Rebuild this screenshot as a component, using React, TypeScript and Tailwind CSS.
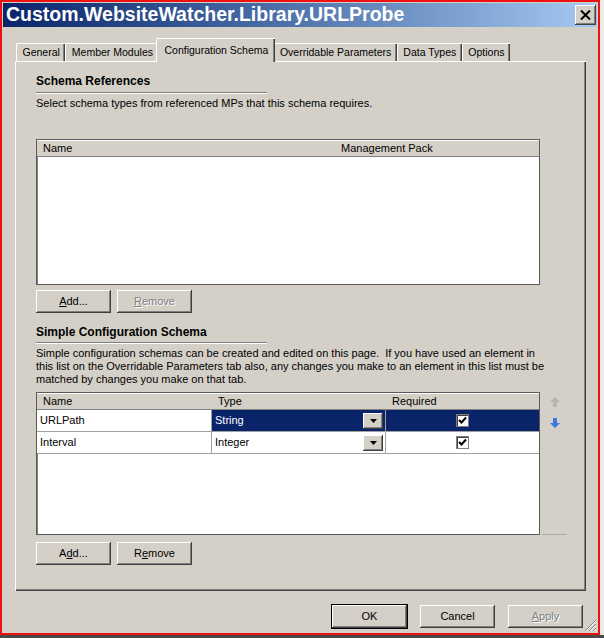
import React from 'react';

const raised =
  'bg-[#d4d0c8] shadow-[inset_-1px_-1px_0_#404040,inset_1px_1px_0_#ffffff,inset_-2px_-2px_0_#808080,inset_2px_2px_0_#d4d0c8]';

function Button({ children, disabled, isDefault }: { children: React.ReactNode; disabled?: boolean; isDefault?: boolean }) {
  return (
    <div
      className={`flex h-[23px] w-[75px] items-center justify-center text-[11px] ${raised} ${
        isDefault ? 'outline outline-1 outline-black' : ''
      } ${disabled ? 'text-[#808080] [text-shadow:1px_1px_0_#ffffff]' : 'text-black'}`}
    >
      {children}
    </div>
  );
}

function Tab({ label, active }: { label: string; active?: boolean }) {
  if (active) {
    return (
      <div className="relative z-10 -mx-[2px] -mb-px flex h-[24px] items-start rounded-tl-[2px] border-l border-t border-white bg-[#d4d0c8] px-[7px] pt-[4px] text-[10.5px] shadow-[inset_-1px_0_0_#404040,inset_-2px_0_0_#808080]">
        {label}
      </div>
    );
  }
  return (
    <div className="flex h-[18px] items-center rounded-tl-[2px] border-l border-t border-white bg-[#d4d0c8] px-[5.5px] text-[10.5px] shadow-[inset_-1px_0_0_#404040,inset_-2px_0_0_#808080]">
      {label}
    </div>
  );
}

function HeaderCell({ label, w, last }: { label: string; w?: string; last?: boolean }) {
  return (
    <div
      className={`flex h-[17px] items-center pl-[6px] text-[11px] ${w ?? 'flex-1'} ${
        last ? '' : 'shadow-[inset_-1px_0_0_#808080,inset_-2px_0_0_#ffffff]'
      } shadow-[inset_0_-1px_0_#808080]`}
    >
      {label}
    </div>
  );
}

function Check() {
  return (
    <div className="flex h-[13px] w-[13px] items-center justify-center border border-[#808080] bg-white shadow-[inset_1px_1px_0_#404040]">
      <svg width="9" height="9" viewBox="0 0 9 9">
        <path d="M1 4 L3.5 6.5 L8 1.5" stroke="#000" strokeWidth="2" fill="none" />
      </svg>
    </div>
  );
}

function DropBtn() {
  return (
    <div className={`flex h-[16px] w-[20px] items-center justify-center ${raised}`}>
      <svg width="7" height="4" viewBox="0 0 7 4">
        <path d="M0 0 H7 L3.5 4 Z" fill="#000" />
      </svg>
    </div>
  );
}

function Row({ name, type, selected }: { name: string; type: string; selected?: boolean }) {
  const sel = selected ? 'bg-[#0a246a] text-white' : 'bg-white text-black';
  return (
    <div className="flex h-[22px] border-b border-[#a0a0a0] text-[11px]">
      <div className="flex w-[175px] items-center border-r border-[#a0a0a0] bg-white pl-[3px]">{name}</div>
      <div className={`flex w-[174px] items-center justify-between border-r border-[#a0a0a0] pl-[3px] pr-[2px] ${sel}`}>
        <span>{type}</span>
        <DropBtn />
      </div>
      <div className={`flex flex-1 items-center justify-center ${sel}`}>
        <Check />
      </div>
    </div>
  );
}

export default function App() {
  return (
    <div className="h-[638px] w-[604px] bg-[#ececec] font-['Liberation_Sans',Arial,sans-serif] text-black">
      <div className="relative flex h-[635px] w-[600px] flex-col border-2 border-[#ee1111] bg-[#d4d0c8]">
        {/* title bar */}
        <div className="mx-px mt-px flex h-[24px] items-center justify-between bg-gradient-to-r from-[#0a246a] to-[#a6caf0] pl-[3px] pr-[1px]">
          <span className="text-[19.5px] font-bold leading-none text-white">Custom.WebsiteWatcher.Library.URLProbe</span>
          <div className={`flex h-[20px] w-[21px] items-center justify-center ${raised}`}>
            <svg width="11" height="10" viewBox="0 0 11 10">
              <path d="M1 0.5 L10 9.5 M10 0.5 L1 9.5" stroke="#000" strokeWidth="2" />
            </svg>
          </div>
        </div>

        {/* tabs */}
        <div className="mt-[11px] flex h-[23px] items-end pl-[14px]">
          <Tab label="General" />
          <Tab label="Member Modules" />
          <Tab label="Configuration Schema" active />
          <Tab label="Overridable Parameters" />
          <Tab label="Data Types" />
          <Tab label="Options" />
        </div>

        {/* tab panel */}
        <div className="ml-[13px] flex h-[530px] w-[571px] flex-col border-l border-t border-white pl-[20px] pt-[12px] shadow-[inset_-1px_-1px_0_#404040,inset_-2px_-2px_0_#808080]">
          <div className="h-[14px] text-[12px] font-bold leading-[14px]">Schema References</div>
          <div className="mt-[4px] h-[2px] w-[231px] border-t border-[#808080] border-b border-b-white" />
          <div className="mt-[3px] text-[11px] leading-[13px]">Select schema types from referenced MPs that this schema requires.</div>

          <div className="mt-[29px] flex h-[146px] w-[504px] flex-col border border-[#5a5a5a] bg-white shadow-[inset_1px_1px_0_#808080]">
            <div className="flex bg-[#d4d0c8] shadow-[inset_0_1px_0_#ffffff]">
              <HeaderCell label="Name" w="w-[298px]" />
              <HeaderCell label="Management Pack" last />
            </div>
          </div>

          <div className="mt-[5px] flex gap-[6px]">
            <Button>
              <span><u>A</u>dd...</span>
            </Button>
            <Button disabled>
              <span><u>R</u>emove</span>
            </Button>
          </div>

          <div className="mt-[12px] h-[14px] text-[12px] font-bold leading-[14px]">Simple Configuration Schema</div>
          <div className="mt-[3px] h-[2px] w-[231px] border-t border-[#808080] border-b border-b-white" />
          <p className="mt-[3px] w-[515px] text-[11px] leading-[13px]">
            Simple configuration schemas can be created and edited on this page.&nbsp; If you have used an element in this list on the Overridable Parameters tab also, any changes you make to an element in this list must be matched by changes you make on that tab.
          </p>

          <div className="mt-[6px] flex">
            <div className="flex h-[143px] w-[504px] flex-col border border-[#5a5a5a] bg-white shadow-[inset_1px_1px_0_#808080]">
              <div className="flex bg-[#d4d0c8] shadow-[inset_0_1px_0_#ffffff]">
                <HeaderCell label="Name" w="w-[175px]" />
                <HeaderCell label="Type" w="w-[174px]" />
                <HeaderCell label="Required" last />
              </div>
              <Row name="URLPath" type="String" selected />
              <Row name="Interval" type="Integer" />
            </div>
            <div className="ml-[2px] flex h-[143px] w-[25px] flex-col items-center border-b border-[#a8a8a8] pt-[5px]">
              <svg width="10" height="10" viewBox="0 0 10 10">
                <path d="M3 10 V5 H0 L5 0 L10 5 H7 V10 Z" fill="#b4b4b4" />
              </svg>
              <svg className="mt-[11px]" width="10" height="10" viewBox="0 0 10 10">
                <path d="M3 0 V5 H0 L5 10 L10 5 H7 V0 Z" fill="#3c78e0" />
              </svg>
            </div>
          </div>

          <div className="mt-[7px] flex gap-[6px]">
            <Button>
              <span>A<u>d</u>d...</span>
            </Button>
            <Button>
              <span>R<u>e</u>move</span>
            </Button>
          </div>
        </div>

        {/* dialog buttons */}
        <div className="mt-[14px] flex justify-end gap-[13px] pr-[15px]">
          <Button isDefault>OK</Button>
          <Button>Cancel</Button>
          <Button disabled>
            <span><u>A</u>pply</span>
          </Button>
        </div>

        <svg className="absolute bottom-[1px] right-[1px]" width="13" height="13" viewBox="0 0 13 13">
          <path d="M12 1 L1 12 M12 5 L5 12 M12 9 L9 12" stroke="#808080" strokeWidth="1" />
          <path d="M12 2 L2 12 M12 6 L6 12 M12 10 L10 12" stroke="#ffffff" strokeWidth="1" />
        </svg>
      </div>
      <div className="h-[3px] w-[604px] bg-[#4a4a4a]" />
    </div>
  );
}
